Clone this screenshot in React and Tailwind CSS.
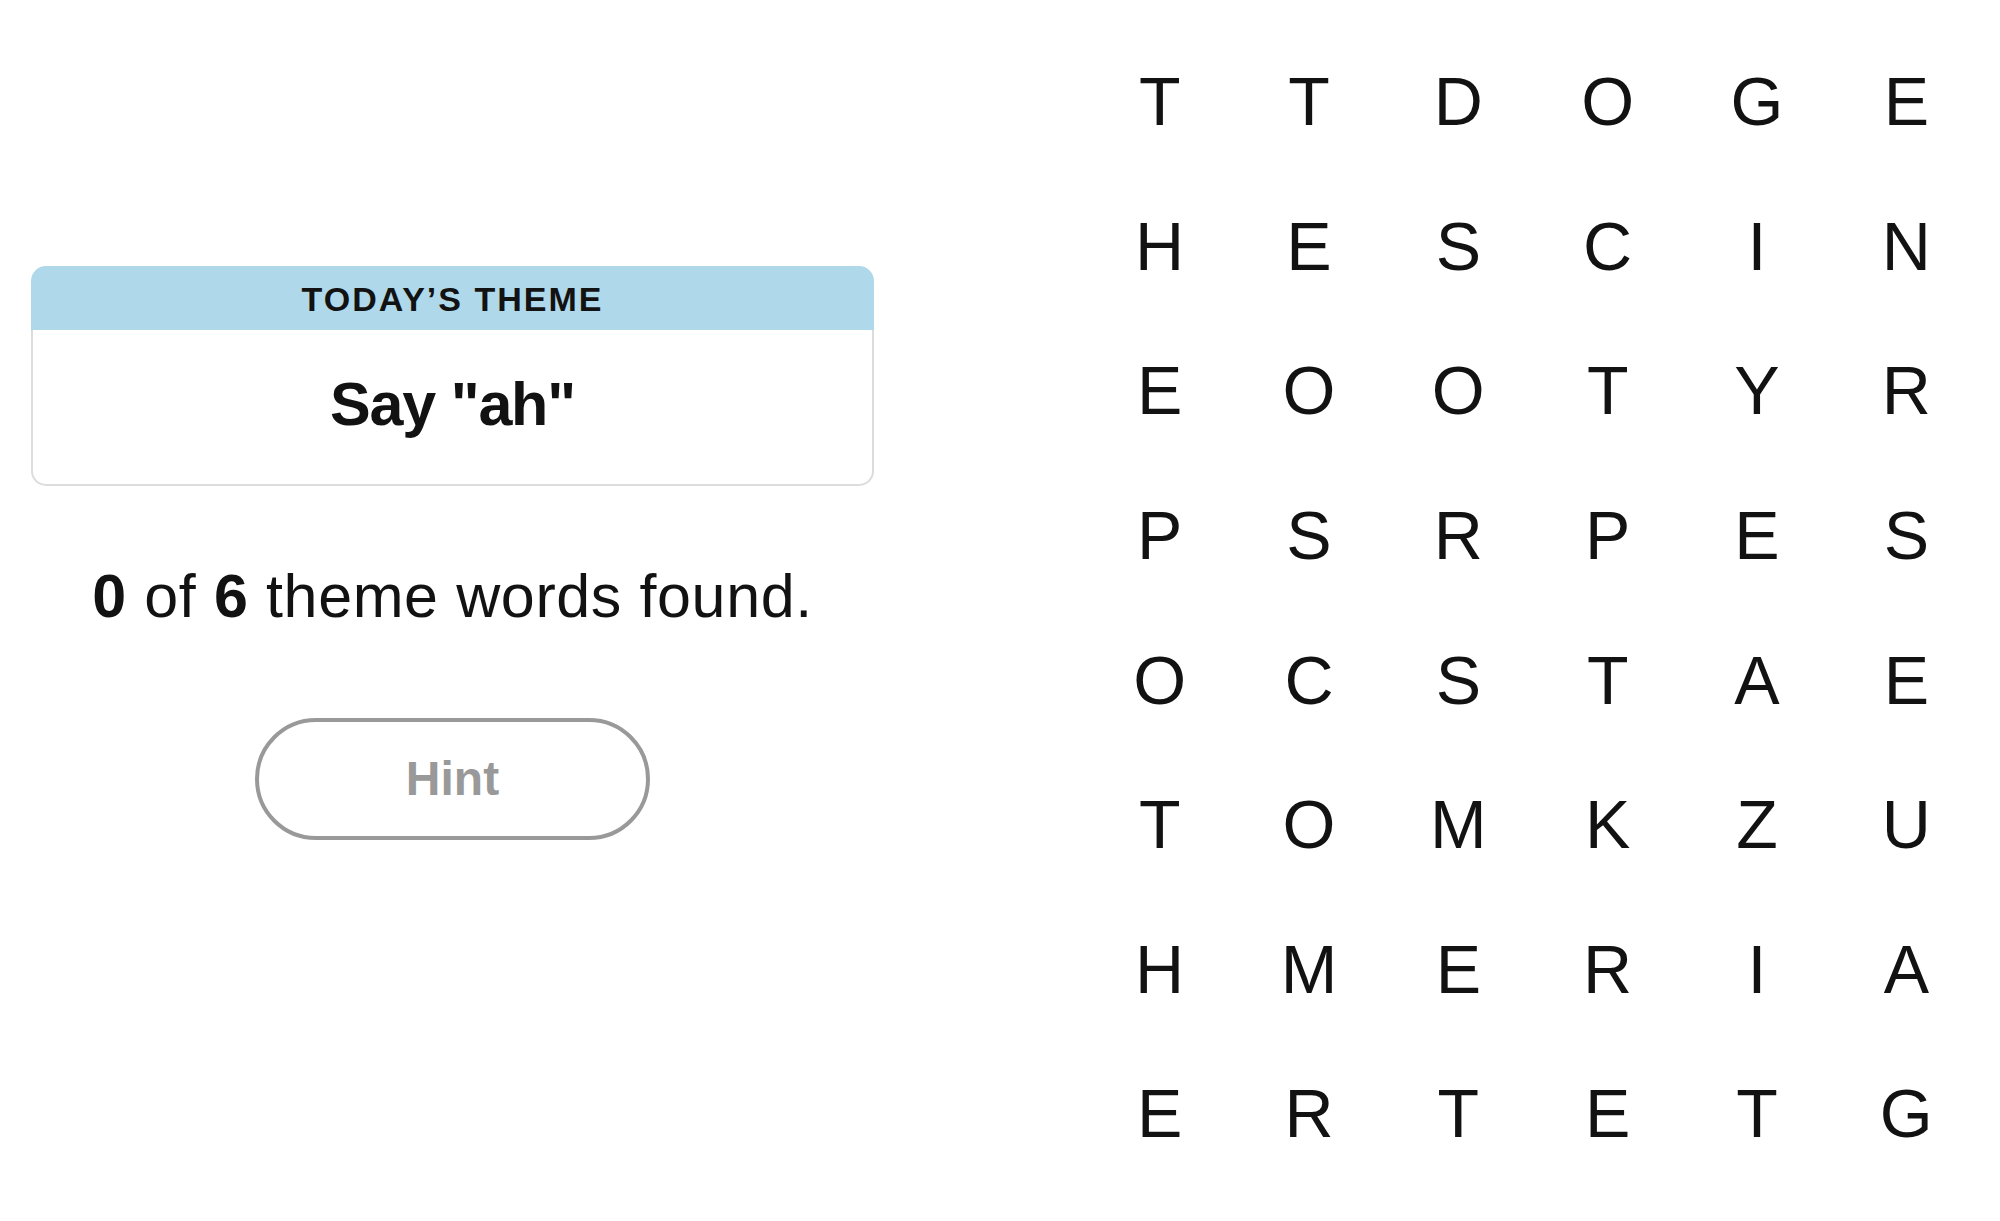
const LETTERS = [
  "TTDOGE",
  "HESCIN",
  "EOOTYR",
  "PSRPES",
  "OCSTAE",
  "TOMKZU",
  "HMERIA",
  "ERTETG",
];

function ThemeCard() {
  return (
    <div className="w-full rounded-[15px]">
      <div className="flex h-[64px] items-center justify-center rounded-t-[15px] bg-[#afd8eb] pt-[2px]">
        <span className="text-[34px] font-bold uppercase leading-none tracking-[2px] text-[#121212]">
          Today’s Theme
        </span>
      </div>
      <div className="flex h-[156px] items-center justify-center rounded-b-[15px] border-2 border-t-0 border-[#dcdcdc] pb-[5px]">
        <span className="text-[61px] font-bold tracking-[-0.02em] text-[#121212]">Say "ah"</span>
      </div>
    </div>
  );
}

export default function App() {
  return (
    <div
      className="flex h-[1221px] w-[2000px] bg-white text-[#121212]"
      style={{ fontFamily: '"Liberation Sans", Arial, sans-serif' }}
    >
      <div className="flex w-[905px] flex-col items-center px-[31px] pt-[266px]">
        <ThemeCard />
        <p className="mt-[74px] text-[61px] leading-[72px] tracking-[0.01em]">
          <strong>0</strong> of <strong>6</strong> theme words found.
        </p>
        <button className="mt-[86px] flex h-[122px] w-[395px] items-center justify-center rounded-full border-4 border-[#999999] text-[48px] font-bold text-[#999999]">
          Hint
        </button>
      </div>

      <div className="ml-[180px] pt-[29px]">
        <div className="grid w-[896px] grid-cols-6">
          {LETTERS.flatMap((row, r) =>
            row.split("").map((ch, c) => (
              <div
                key={`${r}-${c}`}
                className="flex h-[144.6px] items-center justify-center text-[68px] leading-none"
              >
                {ch}
              </div>
            ))
          )}
        </div>
      </div>
    </div>
  );
}
